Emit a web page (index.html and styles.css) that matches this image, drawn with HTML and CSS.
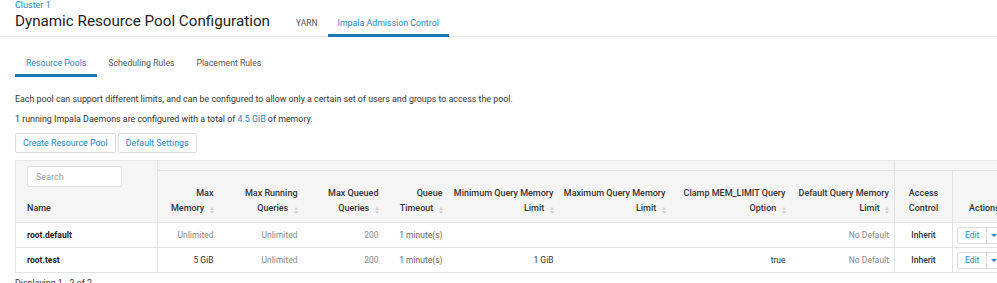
FILE: index.html
```html
<!DOCTYPE html>
<html lang="en">
  <head>
    <meta charset="utf-8" />
    <title>Dynamic Resource Pool Configuration</title>
    <link rel="stylesheet" href="styles.css">
  </head>
  <body>
    <div class="crumb">Cluster 1</div>
    <div class="page-head">
      <h1>Dynamic Resource Pool Configuration</h1>
      <nav class="top-tabs">
        <a class="tab-yarn">YARN</a>
        <a class="active">Impala Admission Control</a>
      </nav>
    </div>

    <nav class="sub-tabs">
      <a class="active">Resource Pools</a>
      <a>Scheduling Rules</a>
      <a>Placement Rules</a>
    </nav>

    <div class="content">
      <p>Each pool can support different limits, and can be configured to allow only a certain set of users and groups to access the pool.</p>
      <p class="second">1 running Impala Daemons are configured with a total of <a class="link">4.5 GiB</a> of memory.</p>

      <div class="button-bar">
        <button type="button">Create Resource Pool</button>
        <button type="button">Default Settings</button>
      </div>

      <table class="pools">
        <colgroup>
          <col style="width:142px">
          <col style="width:61px">
          <col style="width:84px">
          <col style="width:81px">
          <col style="width:64px">
          <col style="width:111px">
          <col style="width:112px">
          <col style="width:120px">
          <col style="width:104px">
          <col style="width:58px">
          <col style="width:80px">
        </colgroup>
        <thead>
          <tr class="group-row">
            <th rowspan="2" class="name-head">
              <input type="text" class="search" placeholder="Search">
              Name
            </th>
            <th colspan="8" class="group"></th>
            <th colspan="2" class="group side"></th>
          </tr>
          <tr class="col-row">
            <th>Max<br>Memory <span class="sort"></span></th>
            <th>Max Running<br>Queries <span class="sort"></span></th>
            <th>Max Queued<br>Queries <span class="sort"></span></th>
            <th>Queue<br>Timeout <span class="sort"></span></th>
            <th>Minimum Query Memory<br>Limit <span class="sort"></span></th>
            <th>Maximum Query Memory<br>Limit <span class="sort"></span></th>
            <th>Clamp MEM_LIMIT Query<br>Option <span class="sort"></span></th>
            <th>Default Query Memory<br>Limit <span class="sort"></span></th>
            <th class="access">Access<br>Control</th>
            <th class="actions-head">Actions</th>
          </tr>
        </thead>
        <tbody>
          <tr>
            <td class="name">root.default</td>
            <td class="muted">Unlimited</td>
            <td class="muted">Unlimited</td>
            <td class="muted">200</td>
            <td class="soft">1 minute(s)</td>
            <td></td>
            <td></td>
            <td></td>
            <td class="muted">No Default</td>
            <td class="access">Inherit</td>
            <td class="actions">
              <span class="btn-group"><a class="edit">Edit</a><a class="caret"></a></span>
            </td>
          </tr>
          <tr>
            <td class="name">root.test</td>
            <td>5 GiB</td>
            <td class="muted">Unlimited</td>
            <td class="muted">200</td>
            <td class="soft">1 minute(s)</td>
            <td>1 GiB</td>
            <td></td>
            <td>true</td>
            <td class="muted">No Default</td>
            <td class="access">Inherit</td>
            <td class="actions">
              <span class="btn-group"><a class="edit">Edit</a><a class="caret"></a></span>
            </td>
          </tr>
        </tbody>
      </table>

      <div class="footer-count">Displaying 1 - 2 of 2</div>
    </div>
  </body>
</html>
```

FILE: styles.css
```css
html, body {
     margin: 0;
     overflow: hidden;
}

body {
     font-family: Roboto, "Liberation Sans", sans-serif;
     color: #333;
     background: #fff;
}

a {
     cursor: pointer;
}

.crumb {
     padding: 0 15px;
     font-size: 9px;
     line-height: 10px;
     color: #2a86c9;
}

.page-head {
     display: flex;
     align-items: flex-end;
     padding: 1px 15px 0;
     border-bottom: 1px solid #e4e4e4;
}

.page-head h1 {
     margin: 0 16px 5px 0;
     font-size: 15.2px;
     font-weight: 400;
     line-height: 20px;
     color: #222;
}

.top-tabs {
     display: flex;
     margin-bottom: -1px;
}

.top-tabs a {
     padding: 0 10px 5px;
     font-size: 8.8px;
     line-height: 12px;
     color: #555;
     border-bottom: 3px solid transparent;
}

.top-tabs .tab-yarn {
     font-size: 8.5px;
}

.top-tabs a.active {
     color: #2a86c9;
     border-color: #1c78b8;
}

.sub-tabs {
     display: flex;
     margin-top: 20px;
     padding: 0 15px;
}

.sub-tabs a {
     padding: 0 11px 5px;
     font-size: 8.7px;
     line-height: 12px;
     color: #555;
     border-bottom: 3px solid transparent;
}

.sub-tabs a.active {
     color: #2a86c9;
     border-color: #1c78b8;
}

.content {
     padding: 0 15px;
}

.content p {
     margin: 15px 0 0;
     font-size: 8.85px;
     line-height: 14px;
     color: #333;
}

.content p.second {
     margin-top: 6px;
}

.link {
     color: #2a86c9;
}

.button-bar {
     display: flex;
     gap: 2px;
     margin-top: 7px;
}

.button-bar button {
     height: 20px;
     padding: 0 7px;
     font-family: Roboto, "Liberation Sans", sans-serif;
     font-size: 8.85px;
     color: #2a86c9;
     background: #fff;
     border: 1px solid #dcdcdc;
     border-radius: 2px;
}

.pools {
     border-collapse: collapse;
     table-layout: fixed;
     width: 1017px;
     margin-top: 7px;
     font-size: 9px;
     border-left: 1px solid #e6e6e6;
     border-top: 1px solid #e6e6e6;
}

.pools th, .pools td {
     border-bottom: 1px solid #e3e3e3;
     padding: 0 5px;
     text-align: right;
}

.pools thead th {
     background: #f5f5f6;
     font-weight: 500;
     color: #333;
     line-height: 15px;
     vertical-align: bottom;
}

.group-row .group {
     height: 9px;
     padding: 0;
}

.group-row .side {
     border-left: 1px solid #e3e3e3;
}

.name-head {
     padding: 5px 10px 6px 11px !important;
     text-align: left !important;
     border-right: 1px solid #e3e3e3;
}

.search {
     display: block;
     box-sizing: border-box;
     width: 95px;
     height: 21px;
     margin-bottom: 14px;
     padding: 0 8px;
     font-family: Roboto, "Liberation Sans", sans-serif;
     font-size: 9px;
     border: 1px solid #dedede;
     border-radius: 2px;
     background: #fff;
}

.search::placeholder {
     color: #999;
}

.col-row th {
     padding: 14px 5px 6px;
}

.pools .access {
     text-align: center;
     border-left: 1px solid #e3e3e3;
}

.pools .actions-head, .pools .actions {
     text-align: left;
     border-left: 1px solid #e3e3e3;
}

.col-row .actions-head {
     padding-left: 16px;
}

.pools tbody td.actions {
     padding-left: 4px;
}

.sort {
     display: inline-flex;
     flex-direction: column;
     gap: 1px;
     margin-left: 3px;
     vertical-align: 1px;
}

.sort::before, .sort::after {
     content: "";
     width: 0;
     height: 0;
     border-left: 2.5px solid transparent;
     border-right: 2.5px solid transparent;
}

.sort::before {
     border-bottom: 3px solid #d3d3d3;
}

.sort::after {
     border-top: 3px solid #d3d3d3;
}

.pools tbody td {
     height: 24px;
     font-size: 8.5px;
     line-height: 14px;
     color: #333;
     vertical-align: middle;
}

.pools tbody td.name {
     padding-left: 11px;
     text-align: left;
     font-weight: 700;
     color: #222;
     border-right: 1px solid #e3e3e3;
}

.pools tbody td.muted {
     color: #888;
}

.pools tbody td.soft {
     color: #666;
}

.pools tbody td.access {
     font-weight: 500;
}

.btn-group {
     display: inline-flex;
     height: 17px;
     border: 1px solid #dcdcdc;
     border-radius: 2px;
     box-sizing: border-box;
}

.btn-group .edit {
     padding: 0 7px;
     line-height: 15px;
     color: #2a86c9;
     border-right: 1px solid #dcdcdc;
}

.btn-group .caret {
     display: flex;
     align-items: center;
     justify-content: center;
     width: 14px;
}

.btn-group .caret::after {
     content: "";
     border-left: 3px solid transparent;
     border-right: 3px solid transparent;
     border-top: 3px solid #2a86c9;
}

.footer-count {
     margin-top: 3px;
     font-size: 8.85px;
     line-height: 14px;
     color: #333;
}
```
